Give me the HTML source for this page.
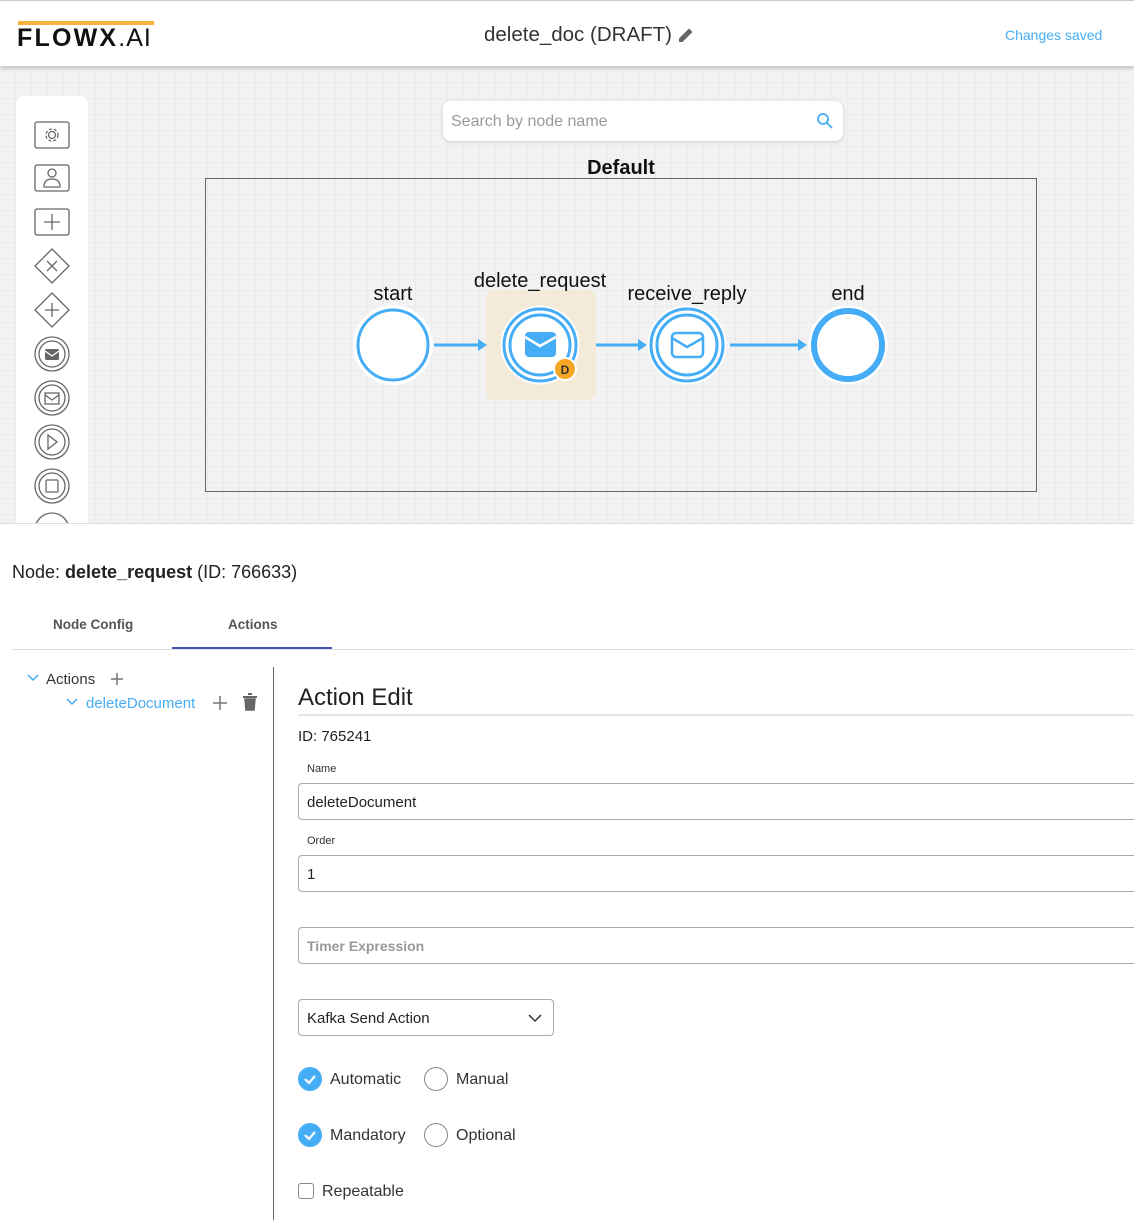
<!DOCTYPE html>
<html><head><meta charset="utf-8"><style>
*{margin:0;padding:0;box-sizing:border-box}
body{width:1134px;height:1220px;overflow:hidden;background:#fff;font-family:"Liberation Sans",sans-serif;position:relative;color:#222}
.a{position:absolute}
.inp{position:absolute;left:298px;width:860px;height:37px;border:1px solid #aaa;border-radius:4px;font-size:15px;padding:0 8px;line-height:37px;color:#222}
.lbl{position:absolute;left:307px;font-size:11px;color:#333}
.chk{position:absolute;width:24px;height:24px;border-radius:50%;background:#45adf6}
.rad{position:absolute;width:24px;height:24px;border-radius:50%;border:1px solid #888}
.t{position:absolute;font-size:16px;color:#333}
</style></head><body>
<div class="a" style="left:0;top:0;width:1134px;height:66px;background:#fff;border-top:1px solid #ccc;box-shadow:0 2px 4px rgba(0,0,0,.25);z-index:2">
  <div class="a" style="left:18px;top:20px;width:136px;height:4px;background:#f5b53d"></div>
  <div class="a" style="left:17px;top:23px;font-size:25px;font-weight:bold;letter-spacing:2.2px;color:#111;transform:scaleX(1.0);white-space:nowrap">FLOWX<span style="font-weight:normal;letter-spacing:1px">.AI</span></div>
  <div class="a" style="left:484px;top:22px;font-size:20.5px;color:#333">delete_doc (DRAFT)</div>
  <svg class="a" style="left:677px;top:25px" width="18" height="18" viewBox="0 0 18 18"><path d="M2 16 L2 12.5 L12 2.5 L15.5 6 L5.5 16 Z" fill="#666"/></svg>
  <div class="a" style="left:1005px;top:26px;font-size:14px;color:#45adf6">Changes saved</div>
</div>
<svg class="a" style="left:0;top:67px" width="1134" height="457">
  <defs><pattern id="g" width="16" height="16" patternUnits="userSpaceOnUse"><path d="M16 0V16H0" fill="none" stroke="#e4e4e4" stroke-width="1"/></pattern></defs>
  <rect width="1134" height="457" fill="#f2f2f2"/><rect width="1134" height="457" fill="url(#g)"/>
  <rect x="205.5" y="111.5" width="831" height="313" fill="none" stroke="#666"/>
  <text x="621" y="107" font-size="20" font-weight="bold" text-anchor="middle" fill="#111" font-family="Liberation Sans">Default</text>
  <rect x="486" y="223" width="110" height="110" rx="8" fill="#f3ead9"/>
  <g font-family="Liberation Sans" font-size="20" fill="#111" text-anchor="middle">
  <text x="393" y="233">start</text><text x="540" y="220">delete_request</text><text x="687" y="233">receive_reply</text><text x="848" y="233">end</text></g>
  <g stroke="#45adf6" fill="#fff">
  <circle cx="393" cy="278" r="38" stroke="#fff" stroke-width="4"/>
  <circle cx="393" cy="278" r="35" stroke-width="3"/>
  <circle cx="540" cy="278" r="39" stroke="#fff"/><circle cx="540" cy="278" r="36" stroke-width="3"/><circle cx="540" cy="278" r="30" stroke-width="3"/>
  <circle cx="687" cy="278" r="39" stroke="#fff"/><circle cx="687" cy="278" r="36" stroke-width="3"/><circle cx="687" cy="278" r="30" stroke-width="3"/>
  <circle cx="848" cy="278" r="39" stroke="#fff"/><circle cx="848" cy="278" r="34" stroke-width="6"/>
  <path d="M434 278H478M596 278H638M730 278H798" stroke-width="3" fill="none"/></g>
  <g fill="#45adf6"><path d="M478 272L487 278L478 284Z"/><path d="M638 272L647 278L638 284Z"/><path d="M798 272L807 278L798 284Z"/>
  <rect x="525" y="265" width="31" height="25" rx="4"/></g>
  <path d="M525 270L540 279L556 270" stroke="#fff" stroke-width="2.5" fill="none"/>
  <rect x="672" y="266" width="31" height="24" rx="4" fill="none" stroke="#45adf6" stroke-width="2.5"/>
  <path d="M672 271L687 280L703 271" stroke="#45adf6" stroke-width="2.5" fill="none"/>
  <circle cx="565" cy="302" r="11" fill="#f5a623" stroke="#fff" stroke-width="2"/>
  <text x="565" y="307" font-size="12" font-weight="bold" text-anchor="middle" fill="#333" font-family="Liberation Sans">D</text>
  <rect x="16" y="29" width="72" height="440" rx="8" fill="#fff"/>
  <g stroke="#666" stroke-width="1.3" fill="none">
  <rect x="35" y="55" width="34" height="26" rx="2"/><circle cx="52" cy="68" r="3.5"/><circle cx="52" cy="68" r="6" stroke-dasharray="3 2"/>
  <rect x="35" y="98" width="34" height="26" rx="2"/><circle cx="52" cy="106" r="4"/><path d="M44 120q0-8 8-8t8 8z"/>
  <rect x="35" y="142" width="34" height="26" rx="2"/><path d="M52 147v16M44 155h16"/>
  <path d="M52 182l17 17-17 17-17-17z"/><path d="M47 194l10 10M57 194l-10 10"/>
  <path d="M52 226l17 17-17 17-17-17z"/><path d="M52 236v14M45 243h14"/>
  <circle cx="52" cy="287" r="17"/><circle cx="52" cy="287" r="13"/>
  <circle cx="52" cy="331" r="17"/><circle cx="52" cy="331" r="13"/><rect x="45" y="326" width="14" height="11"/><path d="M45 328l7 5 7-5"/>
  <circle cx="52" cy="375" r="17"/><circle cx="52" cy="375" r="13"/><path d="M48 368l9 7-9 7z"/>
  <circle cx="52" cy="419" r="17"/><circle cx="52" cy="419" r="13"/><rect x="46" y="413" width="12" height="12" rx="1"/>
  <circle cx="52" cy="463" r="17"/></g>
  <g fill="#666"><rect x="45" y="282" width="14" height="11" rx="1"/></g><path d="M45 284l7 5 7-5" stroke="#fff" fill="none" stroke-width="1.3"/>
</svg>
<div class="a" style="left:0;top:523px;width:1134px;height:697px;background:#fff;border-top:1px solid #ddd"></div>
<div class="a" style="left:443px;top:101px;width:400px;height:40px;background:#fff;border-radius:8px;box-shadow:0 1px 4px rgba(0,0,0,.15)">
  <div class="a" style="left:8px;top:12px;font-size:16px;color:#999">Search by node name</div>
  <svg class="a" style="left:373px;top:11px" width="18" height="18"><circle cx="7" cy="7" r="5" stroke="#45adf6" stroke-width="1.8" fill="none"/><path d="M11 11l5 5" stroke="#45adf6" stroke-width="1.8"/></svg>
</div>
<div class="a" style="left:12px;top:562px;font-size:18px;color:#222">Node: <b>delete_request</b> (ID: 766633)</div>
<div class="a" style="left:53px;top:617px;font-size:13.5px;color:#555;font-weight:bold">Node Config</div>
<div class="a" style="left:228px;top:617px;font-size:13.5px;color:#555;font-weight:bold">Actions</div>
<div class="a" style="left:12px;top:649px;width:1122px;height:1px;background:#ddd"></div>
<div class="a" style="left:172px;top:647px;width:160px;height:2px;background:#3f51b5"></div>
<div class="a" style="left:273px;top:667px;width:1px;height:553px;background:#666"></div>
<svg class="a" style="left:27px;top:673px" width="240" height="40" fill="none" stroke-width="1.5">
<path d="M1 2l5 5 5-5" stroke="#45adf6"/><path d="M90 0v12M84 6h12" stroke="#777"/>
<path d="M40 26l5 5 5-5" stroke="#45adf6"/><path d="M193 23v14M186 30h14" stroke="#777"/>
<path d="M216 24h14M221 21h4" stroke="#666" stroke-width="2"/><path d="M218 26h10l-1 11h-8z" fill="#666" stroke="#666"/></svg>
<div class="t" style="left:46px;top:671px;font-size:15px">Actions</div>
<div class="t" style="left:86px;top:695px;font-size:15px;color:#45adf6">deleteDocument</div>
<div class="a" style="left:298px;top:684px;font-size:24px;color:#222">Action Edit</div>
<div class="a" style="left:298px;top:714px;width:836px;height:2px;background:#e6e6ea"></div>
<div class="t" style="left:298px;top:728px;font-size:15px;color:#222">ID: 765241</div>
<div class="lbl" style="top:763px">Name</div>
<div class="inp" style="top:783px">deleteDocument</div>
<div class="lbl" style="top:835px">Order</div>
<div class="inp" style="top:855px">1</div>
<div class="inp" style="top:927px;color:#999;font-weight:bold;font-size:14px">Timer Expression</div>
<div class="inp" style="top:999px;width:256px">Kafka Send Action
<svg class="a" style="left:229px;top:13px" width="14" height="10"><path d="M1 2l6 6 6-6" stroke="#333" stroke-width="1.5" fill="none"/></svg></div>
<div class="chk" style="left:298px;top:1067px"><svg width="24" height="24"><path d="M7 12l4 4 6-7" stroke="#fff" stroke-width="2.2" fill="none"/></svg></div>
<div class="t" style="left:330px;top:1071px">Automatic</div>
<div class="rad" style="left:424px;top:1067px"></div>
<div class="t" style="left:456px;top:1071px">Manual</div>
<div class="chk" style="left:298px;top:1123px"><svg width="24" height="24"><path d="M7 12l4 4 6-7" stroke="#fff" stroke-width="2.2" fill="none"/></svg></div>
<div class="t" style="left:330px;top:1127px">Mandatory</div>
<div class="rad" style="left:424px;top:1123px"></div>
<div class="t" style="left:456px;top:1127px">Optional</div>
<div class="a" style="left:298px;top:1183px;width:16px;height:16px;border:1px solid #888;border-radius:3px"></div>
<div class="t" style="left:322px;top:1183px">Repeatable</div>
</body></html>
